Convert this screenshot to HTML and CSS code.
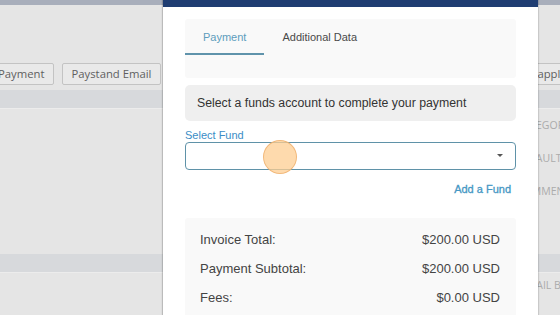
FILE: index.html
```html
<html>
<head>
	<link rel="stylesheet" href="styles.css">
</head>
<body>
	<div class="page">
		<div class="topstrip"></div>
		<div class="toolbar">
			<span class="btn btn-first">Payment</span>
			<span class="btn">Paystand Email</span>
			<span class="spacer"></span>
			<span class="btn btn-last">apply</span>
		</div>
		<div class="band"></div>
		<div class="fields">
			<div class="field">CATEGORY</div>
			<div class="field">DEFAULT</div>
			<div class="field">COMMENTS</div>
		</div>
		<div class="band band-low"></div>
		<div class="fields">
			<div class="field field-email">EMAIL BUTTON</div>
		</div>
	</div>

	<div class="modal">
		<div class="modal-head"></div>
		<div class="modal-body">
			<div class="tabs">
				<div class="tab-row">
					<span class="tab active">Payment</span>
					<span class="tab">Additional Data</span>
				</div>
			</div>
			<div class="notice">Select a funds account to complete your payment</div>
			<label class="label">Select Fund</label>
			<div class="select">
				<span class="caret"></span>
				<span class="click"></span>
			</div>
			<div class="add"><a href="#">Add a Fund</a></div>
			<div class="summary">
				<div class="row"><span>Invoice Total:</span><span>$200.00 USD</span></div>
				<div class="row"><span>Payment Subtotal:</span><span>$200.00 USD</span></div>
				<div class="row"><span>Fees:</span><span>$0.00 USD</span></div>
			</div>
		</div>
	</div>
</body>
</html>
```

FILE: styles.css
```css
BODY { margin:0; background-color:#e5e5e5; font-family:"Open Sans", sans-serif; overflow:hidden; width:560px; height:315px; position:relative; }

.page { width:560px; }
.topstrip { height:5px; background-color:#a8aebb; }
.toolbar { display:flex; align-items:center; height:22px; margin-top:58px; }
.btn { font-size:11.3px; color:#5f5f5f; background-color:#e9e9e9; border:1px solid #c3c3c3; border-radius:2px; padding:0 9px; height:20px; line-height:20px; white-space:nowrap; }
.btn-first { margin-left:-12px; margin-right:8px; padding-right:8px; }
.spacer { flex:1; }
.btn-last { margin-right:-16px; }
.band { height:18px; background-color:#d7d9dc; margin-top:5px; border-bottom:1px solid #ececec; }
.band-low { margin-top:46px; }
.fields { display:flex; flex-direction:column; align-items:flex-start; padding-left:517px; }
.field { font-size:10.5px; color:#ababab; height:33px; line-height:33px; white-space:nowrap; }
.field-email { margin-top:-4px; margin-left:4px; }

.modal { position:absolute; left:163px; top:0; width:375px; height:330px; background-color:white; box-shadow:-1px 0 1px rgba(0,0,0,0.18), 1px 0 1px rgba(0,0,0,0.12); font-family:"Liberation Sans", Arial, sans-serif; }
.modal-head { height:7px; background-color:#1f3d72; }
.modal-body { padding:12px 22px 0 22px; }

.tabs { background-color:#f9f9f9; height:59px; border-radius:3px; }
.tab-row { display:flex; }
.tab { font-size:11px; color:#4a4a4a; padding:0 18px; height:34px; line-height:36px; border-bottom:2px solid transparent; }
.tab.active { color:#5d9dbd; border-bottom-color:#5f93ab; }

.notice { margin-top:7px; height:36px; line-height:36px; background-color:#efefef; border-radius:5px; padding-left:12px; font-size:12.3px; color:#333; }

.label { display:block; margin-top:8px; font-size:11px; color:#3a8dc6; line-height:12px; }
.select { position:relative; height:26px; border:1px solid #5f92a8; border-radius:4px; margin-top:1px; }
.caret { position:absolute; right:12px; top:11px; border-left:3px solid transparent; border-right:3px solid transparent; border-top:3px solid #555; }
.click { position:absolute; left:77px; top:-3px; width:32px; height:32px; border-radius:50%; background-color:rgba(253,205,145,0.75); border:1px solid rgba(236,170,100,0.7); }

.add { text-align:right; padding-right:5px; margin-top:13px; font-size:11px; line-height:13px; }
.add A { color:#4597c4; text-decoration:none; -webkit-text-stroke:0.3px #4597c4; }

.summary { margin-top:22px; background-color:#f9f9f9; border-radius:3px; padding:7px 16px 10px 15px; }
.row { display:flex; justify-content:space-between; font-size:13px; color:#444; height:29px; line-height:29px; }
```
